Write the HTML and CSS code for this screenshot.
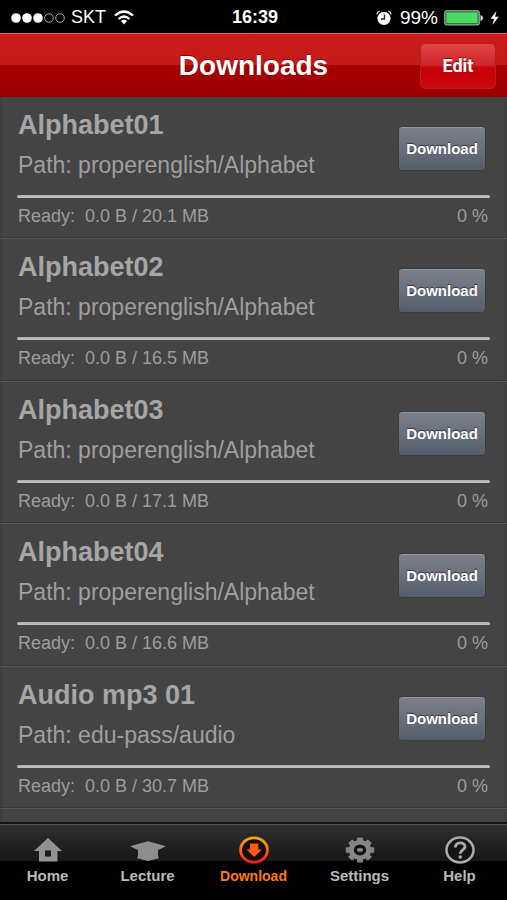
FILE: index.html
```html
<!DOCTYPE html>
<html lang="en">
<head>
<meta charset="utf-8">
<meta name="viewport" content="width=device-width, initial-scale=1">
<title>Downloads</title>
<link rel="stylesheet" href="styles.css">
</head>
<body>
<div class="status">
  <div class="status-left">
    <svg width="54" height="12" viewBox="0 0 54 12"><g fill="#fff"><circle cx="5" cy="6" r="4.800"/><circle cx="16" cy="6" r="4.800"/><circle cx="27" cy="6" r="4.800"/></g><g fill="none" stroke="#aaa"><circle cx="38" cy="6" r="4.300"/><circle cx="49" cy="6" r="4.300"/></g></svg>
    <span class="carrier">SKT</span>
    <svg width="20" height="16" viewBox="0 0 20 16"><g fill="none" stroke="#fff" stroke-width="2.3"><path d="M1 5.500Q10-2.500 19 5.500"/><path d="M4.500 9Q10 4 15.500 9"/></g><path d="M7 11Q10 8.500 13 11L10 14.500z" fill="#fff"/></svg>
  </div>
  <div class="clock">16:39</div>
  <div class="status-right">
    <svg width="16" height="16" viewBox="0 0 16 16"><circle cx="8" cy="8.300" r="6.600" fill="#fff"/><path d="M.8 4.500Q1.200 2 3.600 1.200M15.200 4.500Q14.800 2 12.400 1.200" fill="none" stroke="#ddd" stroke-width="1.300"/><path d="M8.500 4.500V9H5" fill="none" stroke="#222" stroke-width="1.300"/></svg>
    <span class="percent">99%</span>
    <svg width="40" height="16" viewBox="0 0 40 16"><rect x=".8" y=".8" width="34.400" height="14" rx="2" fill="#4cd964" stroke="#a9aaa9" stroke-width="1.200"/><rect x="1.900" y="1.900" width="32.200" height="11.800" rx="1" fill="none" stroke="#123016" stroke-width=".7"/><path d="M36.500 5Q39 5.500 39 8T36.500 11z" fill="#ddd"/></svg>
    <svg width="9" height="16" viewBox="0 0 9 16"><path d="M6.500 1L.5 8.700H4L2.500 15 8.700 6.700H5z" fill="#fff"/></svg>
  </div>
</div>
<header class="bar">
  <h1>Downloads</h1>
  <button class="edit" type="button">Edit</button>
</header>
<main class="list">
  <article class="row">
    <div class="top"><div class="info"><h2>Alphabet01</h2><p>Path: properenglish/Alphabet</p></div><button class="get" type="button">Download</button></div>
    <div class="track"></div>
    <div class="state"><span>Ready:&nbsp; 0.0 B / 20.1 MB</span><span>0 %</span></div>
  </article>
  <article class="row">
    <div class="top"><div class="info"><h2>Alphabet02</h2><p>Path: properenglish/Alphabet</p></div><button class="get" type="button">Download</button></div>
    <div class="track"></div>
    <div class="state"><span>Ready:&nbsp; 0.0 B / 16.5 MB</span><span>0 %</span></div>
  </article>
  <article class="row">
    <div class="top"><div class="info"><h2>Alphabet03</h2><p>Path: properenglish/Alphabet</p></div><button class="get" type="button">Download</button></div>
    <div class="track"></div>
    <div class="state"><span>Ready:&nbsp; 0.0 B / 17.1 MB</span><span>0 %</span></div>
  </article>
  <article class="row">
    <div class="top"><div class="info"><h2>Alphabet04</h2><p>Path: properenglish/Alphabet</p></div><button class="get" type="button">Download</button></div>
    <div class="track"></div>
    <div class="state"><span>Ready:&nbsp; 0.0 B / 16.6 MB</span><span>0 %</span></div>
  </article>
  <article class="row">
    <div class="top"><div class="info"><h2>Audio mp3 01</h2><p>Path: edu-pass/audio</p></div><button class="get" type="button">Download</button></div>
    <div class="track"></div>
    <div class="state"><span>Ready:&nbsp; 0.0 B / 30.7 MB</span><span>0 %</span></div>
  </article>
</main>
<nav class="tabs">
  <a href="#home"><svg width="30" height="28" viewBox="0 0 30 28"><path fill="#929292" fill-rule="evenodd" d="M15 2L29 15H24.500V25.500H6V15H1zM12 14.500V20.500H18V14.500z"/></svg>Home</a>
  <a href="#lecture"><svg width="38" height="28" viewBox="0 0 38 28"><path fill="#8e8e8e" d="M19 5.200L37 10.300 29 14V20L30 22.300 19 25 8 22.300 9 20V14L1 10.300z"/></svg>Lecture</a>
  <a href="#download" class="active" aria-current="page"><svg width="30" height="28" viewBox="0 0 30 28"><defs><linearGradient id="fire" x1="0" y1="0" x2="0" y2="1"><stop offset="0" stop-color="#ffa51a"/><stop offset=".5" stop-color="#ff6518"/><stop offset="1" stop-color="#f01b1b"/></linearGradient></defs><ellipse cx="15" cy="14" rx="13.400" ry="12.200" fill="#150b06" stroke="url(#fire)" stroke-width="2.800"/><path d="M11 7.500H19.300V13.500H23L15.200 21 7.500 13.500H11z" fill="#ff5a16"/></svg>Download</a>
  <a href="#settings"><svg width="30" height="28" viewBox="0 0 30 28"><g transform="translate(15 14) scale(1 .88)"><g fill="#858585"><rect x="-3" y="-14.200" width="6" height="28.400" rx="1"/><rect x="-14.200" y="-3" width="28.400" height="6" rx="1"/><g transform="rotate(45)"><rect x="-3" y="-14" width="6" height="28" rx="1"/><rect x="-14" y="-3" width="28" height="6" rx="1"/></g><circle r="11.300"/></g><circle r="6.200" fill="#111"/><ellipse rx="3" ry="2.200" fill="#8a8a8a"/></g></svg>Settings</a>
  <a href="#help"><svg width="30" height="28" viewBox="0 0 30 28"><ellipse cx="15" cy="14" rx="13.500" ry="12.400" fill="#151515" stroke="#acacac" stroke-width="2.500"/><path d="M10.300 11.500C10 5.500 20.300 5.500 20 10.800 19.800 13.800 15.200 14 15.200 17.800" fill="none" stroke="#acacac" stroke-width="2.800"/><circle cx="15.200" cy="21" r="1.800" fill="#acacac"/></svg>Help</a>
</nav>
</body>
</html>
```
FILE: styles.css
```css
* { box-sizing: border-box; }
body {
  margin: 0;
  min-height: 100vh;
  display: flex;
  flex-direction: column;
  background: #000;
  color: #a6a6a6;
  font-family: "Liberation Sans", Arial, sans-serif;
}
h1, h2, p { margin: 0; }
button { font-family: inherit; padding: 0; cursor: pointer; }
svg { display: block; flex: none; }

.status {
  height: 33px;
  padding: 2px 8px 0 11px;
  display: grid;
  grid-template-columns: 1fr auto 1fr;
  align-items: center;
  color: #fff;
  font-size: 18px;
}
.status-left, .status-right { display: flex; align-items: center; }
.status-left { gap: 8px; }
.carrier { margin-left: -2px; }
.status-right { justify-content: flex-end; gap: 6px; }
.percent { font-size: 19px; margin-left: 2px; }
.clock { font-weight: bold; }

.bar {
  height: 64px;
  padding: 0 11px;
  display: grid;
  grid-template-columns: 1fr auto 1fr;
  align-items: center;
  border-top: 1px solid #e26a66;
  background: linear-gradient(#d01a1a 0, #c01c1c 50%, #a90000 50%, #980000 100%);
}
.bar h1 {
  grid-column: 2;
  color: #fff;
  font-size: 28px;
  line-height: 32px;
  text-shadow: 0 -1px 1px rgba(70, 0, 0, .6);
}
.edit {
  justify-self: end;
  width: 76px;
  height: 46px;
  border: 1px solid #c01a1a;
  border-radius: 5px;
  background: linear-gradient(#dd4646 0, #d0252a 48%, #c50006 54%, #cb0710 100%);
  color: #fff;
  font-family: Roboto, sans-serif;
  font-size: 18px;
  font-weight: bold;
  text-shadow: 0 -1px 1px rgba(60, 0, 0, .6);
}

.list {
  flex: 1;
  display: flex;
  flex-direction: column;
  padding-bottom: 13px;
  background: #444;
  box-shadow: inset 3px 0 2px -1px #3e3e3e, inset -3px 0 2px -1px #3e3e3e;
}
.row {
  flex: 1;
  padding: 10px 17px 0;
  border-bottom: 1px solid #555;
  box-shadow: inset 0 -1px 0 #383838;
}
.top {
  height: 88px;
  padding: 0 4px 0 1px;
  display: flex;
  justify-content: space-between;
}
.info h2 { font-size: 27px; line-height: 36px; }
.info p { font-size: 23px; line-height: 44px; color: #9f9f9f; }
.get {
  flex: none;
  width: 88px;
  height: 45px;
  margin-top: 19px;
  border: 1px solid #3a3c40;
  border-radius: 4px;
  background: linear-gradient(#7c808a, #686e7a 55%, #525d6c);
  box-shadow: inset 0 1px 0 #9598a0;
  color: #fff;
  font-size: 15px;
  font-weight: bold;
  text-shadow: 0 -1px 1px rgba(20, 25, 35, .7);
}
.track {
  height: 3px;
  border-radius: 2px;
  background: linear-gradient(#acacac, #c4c4c4);
}
.state {
  padding: 0 2px 0 1px;
  display: flex;
  justify-content: space-between;
  font-size: 18px;
  line-height: 36px;
  color: #9d9d9d;
}

.tabs {
  height: 78px;
  display: grid;
  grid-template-columns: 95fr 105fr 107fr 105fr 95fr;
  border-top: 2px solid #151515;
  box-shadow: inset 0 1px 0 #555;
  background: linear-gradient(#303030 0, #171717 37px, #000 37px);
}
.tabs a {
  display: flex;
  flex-direction: column;
  align-items: center;
  gap: 3px;
  padding-top: 12px;
  color: #bababa;
  font-size: 15px;
  font-weight: bold;
  line-height: 18px;
  text-decoration: none;
}
.tabs .active { color: #ff7c0a; font-size: 14px; }
```
